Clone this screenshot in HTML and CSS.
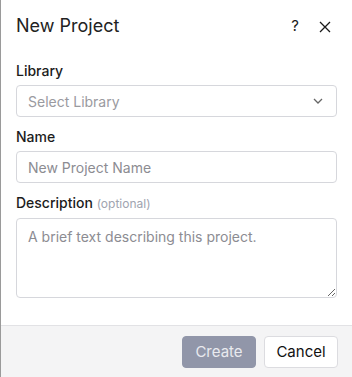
FILE: index.html
```html
<!DOCTYPE html>
<html>
<head>
<meta charset="utf-8">
<link rel="stylesheet" href="styles.css">
</head>
<body>
<div class="dialog">
  <div class="header">
    <h1 class="title">New Project</h1>
    <div class="actions">
      <span class="help">?</span>
      <svg class="close" width="12" height="12" viewBox="0 0 12 12"><path d="M1 1L11 11M11 1L1 11" stroke="#1a1a1a" stroke-width="1.3" fill="none"/></svg>
    </div>
  </div>
  <div class="body">
    <label class="label">Library</label>
    <div class="select">
      <span class="placeholder">Select Library</span>
      <svg class="chev" width="10" height="6" viewBox="0 0 10 6"><path d="M1 1L5 5L9 1" stroke="#666" stroke-width="1.3" fill="none"/></svg>
    </div>
    <label class="label gap">Name</label>
    <input class="input" type="text" placeholder="New Project Name">
    <label class="label gap">Description <span class="opt">(optional)</span></label>
    <textarea class="textarea" placeholder="A brief text describing this project."></textarea>
  </div>
  <div class="footer">
    <button class="btn primary">Create</button>
    <button class="btn secondary">Cancel</button>
  </div>
</div>
</body>
</html>
```
FILE: styles.css
```css
* { box-sizing: border-box; }
html, body { margin: 0; padding: 0; background: #fff; }
body { font-family: Inter, "Noto Sans", sans-serif; color: #1f2328; }
.dialog {
  width: 352px;
  height: 377px;
  border-left: 1px solid #9a9a9a;
  display: flex;
  flex-direction: column;
  background: #fff;
}
.header {
  height: 52px;
  display: flex;
  align-items: center;
  justify-content: space-between;
  padding: 0 21px 0 15px;
}
.title {
  margin: 0;
  font-size: 18px;
  font-weight: 400;
  line-height: 28px;
  color: #222;
}
.actions { display: flex; align-items: center; gap: 20px; }
.help { font-size: 15px; line-height: 20px; color: #1a1a1a; }
.close { display: block; margin-top: 2px; }
.body {
  flex: 1;
  display: flex;
  flex-direction: column;
  padding: 9px 15px 0;
}
.label {
  font-size: 14px;
  font-weight: 500;
  line-height: 20px;
  color: #1c1c1c;
  margin-bottom: 4px;
}
.label.gap { margin-top: 10px; }
.opt { font-size: 12px; font-weight: 400; color: #a0a4b0; }
.select, .input {
  height: 32px;
  border: 1px solid #d6d7dc;
  border-radius: 4px;
  font-family: inherit;
  font-size: 14px;
  padding: 0 11px;
}
.select {
  display: flex;
  align-items: center;
  justify-content: space-between;
  padding-right: 13px;
}
.placeholder { color: #9a9aa0; }
.input { outline: none; color: #1c1c1c; }
.input::placeholder, .textarea::placeholder { color: #8c8c92; }
.textarea {
  height: 80px;
  border: 1px solid #d6d7dc;
  border-radius: 4px;
  font-family: inherit;
  font-size: 14px;
  line-height: 20px;
  padding: 8px 11px;
  outline: none;
  margin: 0;
}
.footer {
  height: 52px;
  border-top: 1px solid #e2e2e5;
  background: #f4f4f5;
  display: flex;
  justify-content: flex-end;
  align-items: center;
  gap: 8px;
  padding: 0 14px 0 15px;
}
.btn {
  height: 32px;
  width: 74px;
  border-radius: 4px;
  font-family: inherit;
  font-size: 15px;
  padding: 0;
}
.primary {
  background: #9196a9;
  border: 1px solid #9196a9;
  color: #e9eaef;
}
.secondary {
  background: #fff;
  border: 1px solid #dcdce0;
  color: #111;
}
```
